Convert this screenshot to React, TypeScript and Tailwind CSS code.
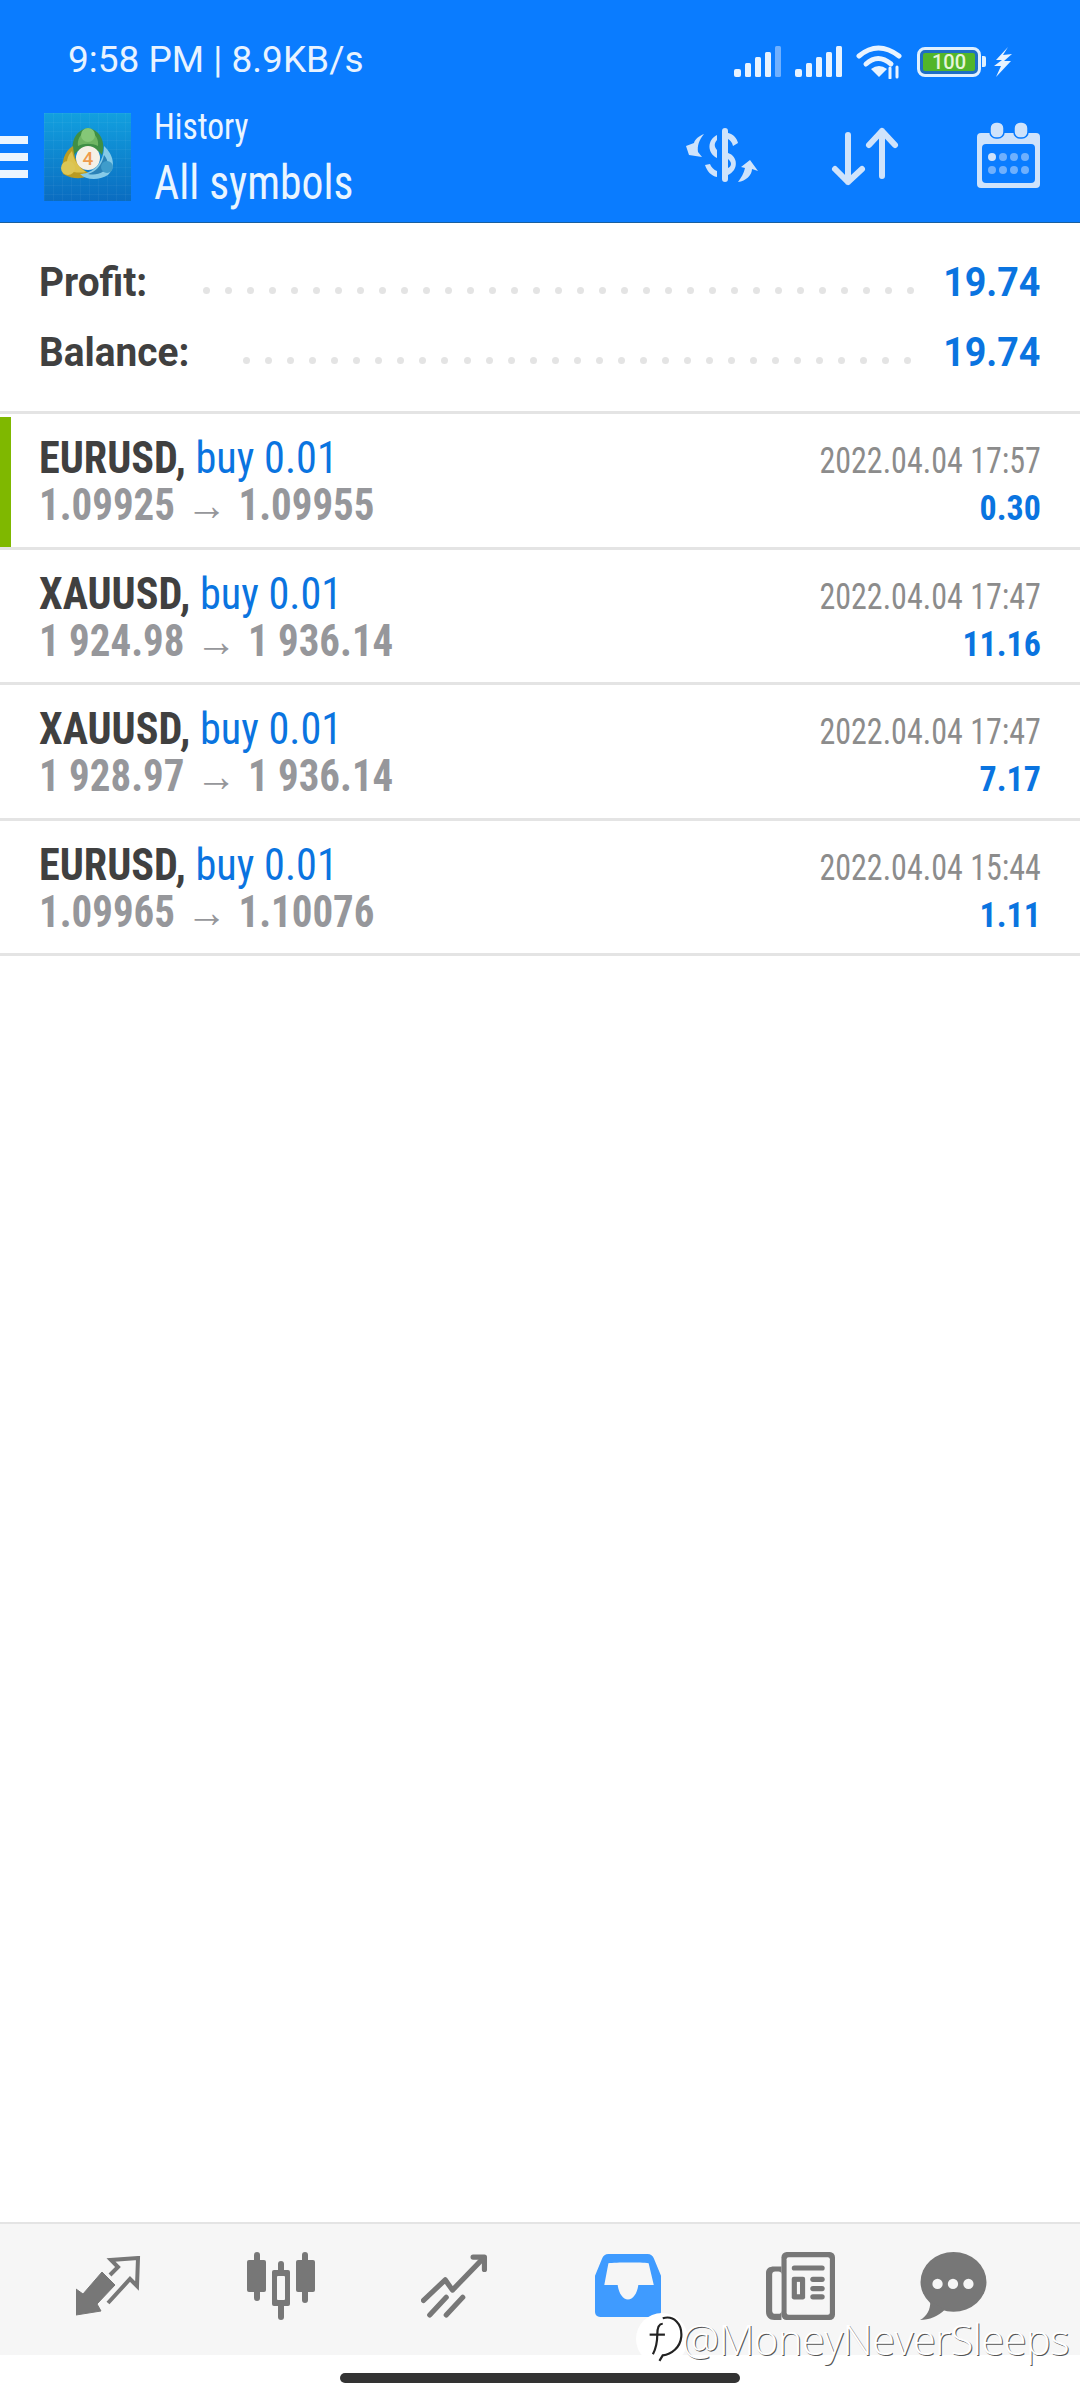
const trades = [
  { symbol: 'EURUSD', volume: 'buy 0.01', prices: '1.09925', close: '1.09955', time: '2022.04.04 17:57', profit: '0.30', active: true },
  { symbol: 'XAUUSD', volume: 'buy 0.01', prices: '1 924.98', close: '1 936.14', time: '2022.04.04 17:47', profit: '11.16', active: false },
  { symbol: 'XAUUSD', volume: 'buy 0.01', prices: '1 928.97', close: '1 936.14', time: '2022.04.04 17:47', profit: '7.17', active: false },
  { symbol: 'EURUSD', volume: 'buy 0.01', prices: '1.09965', close: '1.10076', time: '2022.04.04 15:44', profit: '1.11', active: false },
]

function SignalBars({ lastDim }: { lastDim?: boolean }) {
  return (
    <svg width="48" height="31" viewBox="0 0 48 31" fill="#e8f3ff">
      <rect x="0" y="23" width="7" height="8" rx="2" />
      <rect x="11" y="17" width="6" height="14" rx="1.5" />
      <rect x="21" y="11" width="6" height="20" rx="1.5" />
      <rect x="31" y="6" width="6" height="25" rx="1.5" />
      <rect x="41" y="0" width="6" height="31" rx="1.5" fill={lastDim ? '#6fb0ff' : '#e8f3ff'} />
    </svg>
  )
}

function Wifi() {
  return (
    <svg width="46" height="35" viewBox="0 0 46 35" fill="none" stroke="#e8f3ff" strokeWidth="5" strokeLinecap="round">
      <path d="M3 12 Q22 -4 43 12" />
      <path d="M10 20 Q22 9 35 20" />
      <path d="M23 33 L15 25 Q23 19 31 25 Z" fill="#e8f3ff" stroke="none" />
      <path d="M34 24 V34 M41 23 V33" strokeWidth="3" />
    </svg>
  )
}

function Battery() {
  return (
    <div className="flex items-center">
      <div className="w-[64px] h-[30px] rounded-[8px] border-[3px] border-[#dff0ff] p-[3px] bg-[#1f6fc4]">
        <div className="h-full bg-[#52b52a] rounded-[2px] flex items-center justify-center text-[#e6f5da] text-[20px] font-medium leading-none">
          100
        </div>
      </div>
      <div className="w-[4px] h-[11px] ml-[1px] rounded-r-[2px] bg-[#dff0ff]" />
    </div>
  )
}

function Bolt() {
  return (
    <svg width="18" height="30" viewBox="0 0 18 30" fill="#e8f3ff">
      <path d="M14 0 L2 13 L8 13 L0 19 L7 19 L2 30 L17 14 L10 14 L18 7 L9 8 Z" />
    </svg>
  )
}

function MenuIcon() {
  return (
    <div className="w-[28px] flex flex-col gap-[9px] shrink-0">
      <div className="h-[8px] bg-[#eaf5ff]" />
      <div className="h-[8px] bg-[#eaf5ff]" />
      <div className="h-[8px] bg-[#eaf5ff]" />
    </div>
  )
}

function Logo() {
  return (
    <svg className="ml-[16px] shrink-0" width="87" height="88" viewBox="0 0 87 88">
      <defs>
        <linearGradient id="tile" x1="0" y1="0" x2="0" y2="1">
          <stop offset="0" stopColor="#12a0df" />
          <stop offset="1" stopColor="#0a6cc0" />
        </linearGradient>
        <pattern id="grid" width="9" height="9" patternUnits="userSpaceOnUse">
          <path d="M9 0 H0 V9" fill="none" stroke="#ffffff" strokeOpacity="0.08" />
        </pattern>
      </defs>
      <rect width="87" height="88" fill="url(#tile)" />
      <rect width="87" height="88" fill="url(#grid)" />
      <path d="M44 15 C57 17 62 30 58 42 C52 33 36 33 30 42 C26 30 31 17 44 15 Z" fill="#3f8f45" />
      <path d="M44 18 C52 20 55 27 54 33 C48 30 40 30 34 33 C33 27 36 20 44 18 Z" fill="#6fb562" />
      <path d="M29 33 C20 38 17 50 19 61 C29 67 42 66 48 61 C38 58 30 50 29 33 Z" fill="#b89b22" />
      <path d="M28 38 C23 43 22 50 23 57 C30 60 37 60 42 59 C35 55 30 48 28 38 Z" fill="#dcc24c" />
      <path d="M60 33 C70 42 72 55 64 62 C54 68 42 67 36 61 C46 61 60 53 60 33 Z" fill="#86cbe8" />
      <path d="M60 42 C65 48 65 55 60 58 C54 62 49 62 44 61 C51 59 58 53 60 42 Z" fill="#2b83b8" />
      <circle cx="44" cy="22" r="7" fill="#85c777" />
      <circle cx="24" cy="55" r="7" fill="#dcc655" />
      <circle cx="63" cy="54" r="6" fill="#3f9ccb" />
      <circle cx="44" cy="45" r="12" fill="#f5f0e6" />
      <text x="44" y="52" textAnchor="middle" fontSize="19" fontWeight="500" fill="#ee9b4d" fontFamily="Roboto, sans-serif">
        4
      </text>
    </svg>
  )
}

function SwapIcon() {
  return (
    <svg width="72" height="58" viewBox="0 0 72 58" fill="#cfe3fb">
      <rect x="36" y="2" width="6" height="54" rx="3" />
      <path d="M42 7 C47 8 51 12 52 17 L47 20 C46 16 44 14 42 13 Z" />
      <path d="M31 9 L31 14 C28 17 28 21 31 24 L31 32 C21 27 21 14 31 9 Z" />
      <path d="M42 27 C52 30 53 44 42 49 L42 42 C46 40 46 36 42 33 Z" />
      <path d="M19 39 L24 38 C25 41 28 44 31 45 L31 51 C25 50 21 45 19 39 Z" />
      <path d="M18 8 C13 10 9 13 8 17 L0 20 L3 29 L16 31 L12 26 C11 20 13 14 18 8 Z" />
      <path d="M52 56 C55 52 58 47 59 42 L55 41 L64 34 L72 45 L66 43 C66 49 60 55 52 56 Z" />
    </svg>
  )
}

function SortIcon() {
  return (
    <svg width="70" height="62" viewBox="0 0 70 62" fill="none" stroke="#cfe3fb" strokeWidth="6" strokeLinecap="round" strokeLinejoin="round">
      <path d="M18 9 V56 M5 43 L18 56 L32 43" />
      <path d="M52 5 V50 M39 19 L52 5 L65 19" />
    </svg>
  )
}

function CalendarIcon() {
  return (
    <svg width="63" height="66" viewBox="0 0 63 66">
      <rect x="0" y="11" width="63" height="55" rx="4" fill="#cfe3fb" />
      <rect x="13" y="0" width="14" height="16" rx="6" fill="#cfe3fb" stroke="#0a7cff" strokeWidth="1.5" />
      <rect x="37" y="0" width="14" height="16" rx="6" fill="#cfe3fb" stroke="#0a7cff" strokeWidth="1.5" />
      <rect x="5" y="22" width="53" height="39" rx="4" fill="#0a7cff" />
      {[15, 26, 37, 48].map((cx, i) => (
        <g key={cx}>
          <circle cx={cx} cy="35" r="4" fill={i === 0 ? '#cfe3fb' : '#6fb0fd'} />
          <circle cx={cx} cy="48" r="4" fill="#6fb0fd" />
        </g>
      ))}
    </svg>
  )
}

function TradeIcon() {
  return (
    <svg width="66" height="60" viewBox="0 0 66 60">
      <path d="M0 59 V33 L7 38 L26 16 L39 29 L21 48 L25 55 Z" fill="#777" stroke="#777" strokeLinejoin="round" />
      <path d="M34 19 L42 11 L35 4 L62 2 L61 30 L54 23 L32 47" fill="none" stroke="#777" strokeWidth="4" />
    </svg>
  )
}

function CandlesIcon() {
  return (
    <svg width="70" height="68" viewBox="0 0 68 68" fill="#777">
      <rect x="7" y="0" width="6" height="49" rx="3" />
      <rect x="0" y="8" width="19" height="32" rx="2" />
      <rect x="31" y="9" width="6" height="59" rx="3" />
      <rect x="25" y="18" width="18" height="36" rx="2" />
      <rect x="30" y="24" width="8" height="24" rx="1" fill="#f6f6f6" />
      <rect x="55" y="0" width="6" height="51" rx="3" />
      <rect x="49" y="8" width="19" height="32" rx="2" />
    </svg>
  )
}

function ChartIcon() {
  return (
    <svg width="67" height="64" viewBox="0 0 64 62" fill="none" stroke="#777" strokeWidth="5" strokeLinecap="round" strokeLinejoin="round">
      <path d="M2 45 L23 25 L30 35 L60 4" />
      <path d="M50 3 H61 V15" />
      <path d="M8 59 L24 42 M24 59 L40 42" />
    </svg>
  )
}

function InboxIcon() {
  return (
    <svg width="66" height="63" viewBox="0 0 64 61">
      <path
        fillRule="evenodd"
        d="M13 0 H51 C54 0 56 2 57 4 L64 21 V56 C64 59 62 61 59 61 H5 C2 61 0 59 0 56 V21 L7 4 C8 2 10 0 13 0 Z M13 9 L9 30 H22 C23 38 27 44 32 44 C37 44 41 38 42 30 H57 L52 9 C45 8 20 8 13 9 Z"
        fill="#3f9bff"
      />
    </svg>
  )
}

function NewsIcon() {
  return (
    <svg width="69" height="68" viewBox="0 0 67 66">
      <rect x="15" y="0" width="52" height="66" rx="5" fill="#777" />
      <path d="M0 20 C0 16 3 14 8 14 H15 V66 H8 C3 66 0 63 0 58 Z" fill="#777" />
      <rect x="6" y="19" width="9" height="41" rx="3" fill="#f6f6f6" />
      <rect x="20" y="5" width="42" height="56" rx="2" fill="#f6f6f6" />
      <rect x="25" y="13" width="32" height="5" rx="2.5" fill="#777" />
      <rect x="25" y="24" width="13" height="22" rx="2" fill="#777" />
      <rect x="30" y="29" width="3" height="12" fill="#f6f6f6" />
      <rect x="43" y="24" width="14" height="5" rx="2.5" fill="#777" />
      <rect x="43" y="33" width="14" height="5" rx="2.5" fill="#777" />
      <rect x="43" y="41" width="14" height="5" rx="2.5" fill="#777" />
    </svg>
  )
}

function ChatIcon() {
  return (
    <svg width="67" height="68" viewBox="0 0 65 66">
      <ellipse cx="32.5" cy="29" rx="32" ry="29" fill="#777" />
      <path d="M10 48 C10 56 7 62 0 66 C9 66 18 62 24 56 Z" fill="#777" />
      <circle cx="17" cy="31" r="5" fill="#f6f6f6" />
      <circle cx="32" cy="31" r="5" fill="#f6f6f6" />
      <circle cx="47" cy="31" r="5" fill="#f6f6f6" />
    </svg>
  )
}

function Summary({ label, value, dots, gap }: { label: string; value: string; dots: number; gap: string }) {
  return (
    <div className="flex items-center h-[70px] pl-[39px] pr-[40px]">
      <span className="origin-left scale-x-[0.97] text-[40px] leading-none font-bold text-[#404040] [font-stretch:96%]">{label}</span>
      <div className={`${gap} flex-1 flex justify-between pt-[14px]`}>
        {Array.from({ length: dots }).map((_, i) => (
          <span key={i} className="size-[7px] rounded-full bg-[#e4e4e4]" />
        ))}
      </div>
      <span className="origin-right scale-x-[0.94] text-[40px] leading-none font-bold text-[#0a74e0] [font-stretch:88%]">{value}</span>
    </div>
  )
}

function TradeRow({ trade }: { trade: (typeof trades)[number] }) {
  return (
    <div className="relative h-[135.5px] border-b-[3px] border-[#e4e4e4] pl-[39px] pr-[39px] flex justify-between">
      {trade.active && <div className="absolute left-0 top-[3px] bottom-0 w-[11px] bg-[#7fb800]" />}
      <div className="pt-[21px] [font-stretch:75%] text-[44px] leading-[47px]">
        <div className="origin-left scale-x-[0.96] whitespace-nowrap">
          <span className="font-bold text-[#404040]">{trade.symbol},</span>{' '}
          <span className="text-[#0a74e0]">{trade.volume}</span>
        </div>
        <div className="origin-left scale-x-[0.93] whitespace-nowrap font-bold text-[#96979b]">
          {trade.prices} <span className="mx-[2px] font-normal text-[44px]">→</span> {trade.close}
        </div>
      </div>
      <div className="pt-[24px] text-right [font-stretch:75%]">
        <div className="origin-right scale-x-[0.89] text-[36px] leading-[46px] whitespace-nowrap text-[#8c8c8c]">{trade.time}</div>
        <div className="mt-[2px] origin-right scale-x-[0.97] text-[35px] leading-[46px] font-bold text-[#0a74e0]">{trade.profit}</div>
      </div>
    </div>
  )
}

export default function App() {
  return (
    <div className="relative h-[2400px] w-[1080px] flex flex-col bg-white font-['Roboto',sans-serif] overflow-hidden">
      <header className="h-[223px] shrink-0 bg-[#0a7cff] border-b border-[#1a5f9e]">
        <div className="h-[113px] flex items-start justify-between pl-[68px] pr-[68px] pt-[38px]">
          <span className="text-[37px] leading-[44px] text-[#e8f3ff]">9:58 PM | 8.9KB/s</span>
          <div className="flex items-center gap-[13px] pt-[6px]">
            <SignalBars lastDim />
            <SignalBars />
            <Wifi />
            <div className="ml-[2px]">
              <Battery />
            </div>
            <div className="ml-[-5px]">
              <Bolt />
            </div>
          </div>
        </div>
        <div className="flex items-center h-[88px]">
          <MenuIcon />
          <Logo />
          <div className="ml-[23px] flex-1 self-start text-[#eaf5ff] [font-stretch:75%]">
            <div className="h-[28px] origin-left scale-x-[0.93] text-[36px] leading-[28px]">History</div>
            <div className="mt-[22px] h-[40px] origin-left scale-x-[0.89] text-[49px] leading-[40px] whitespace-nowrap">All symbols</div>
          </div>
          <div className="flex items-center pr-[40px] pb-[4px]">
            <SwapIcon />
            <div className="ml-[72px] mt-[4px]">
              <SortIcon />
            </div>
            <div className="ml-[77px]">
              <CalendarIcon />
            </div>
          </div>
        </div>
      </header>

      <main className="flex-1">
        <div className="h-[191px] pt-[25px] border-b-[3px] border-[#e4e4e4]">
          <Summary label="Profit:" value="19.74" dots={33} gap="ml-[52px] mr-[22px]" />
          <Summary label="Balance:" value="19.74" dots={31} gap="ml-[49px] mr-[25px]" />
        </div>
        {trades.map((trade, i) => (
          <TradeRow key={i} trade={trade} />
        ))}
      </main>

      <footer className="shrink-0">
        <div className="h-[133px] bg-[#f6f6f6] border-t-[2px] border-[#e4e4e4] flex items-center pl-[76px] pb-[8px]">
          <TradeIcon />
          <div className="ml-[104px]">
            <CandlesIcon />
          </div>
          <div className="ml-[105px]">
            <ChartIcon />
          </div>
          <div className="ml-[107px]">
            <InboxIcon />
          </div>
          <div className="ml-[105px]">
            <NewsIcon />
          </div>
          <div className="ml-[85px]">
            <ChatIcon />
          </div>
        </div>
        <div className="h-[45px] flex justify-center pt-[18px]">
          <div className="w-[400px] h-[10px] rounded-full bg-[#333333]" />
        </div>
      </footer>

      <div className="absolute left-[636px] top-[2313px] flex items-center">
        <div className="size-[52px] rounded-full bg-white flex items-center justify-center">
          <svg className="ml-[8px]" width="38" height="48" viewBox="0 0 34 44" fill="none" stroke="#222" strokeWidth="2">
            <path d="M14 3 C24 0 32 8 31 20 C30 30 22 36 14 37 L11 42" />
            <path d="M14 8 C10 8 9 12 9 18 C9 24 8 30 5 36" />
            <path d="M2 18 H16" />
          </svg>
        </div>
        <span className="ml-[-6px] text-[42px] leading-none font-light tracking-[-0.8px] text-white [text-shadow:1px_1px_0_#555] font-['Open_Sans',sans-serif]">
          @MoneyNeverSleeps
        </span>
      </div>
    </div>
  )
}
